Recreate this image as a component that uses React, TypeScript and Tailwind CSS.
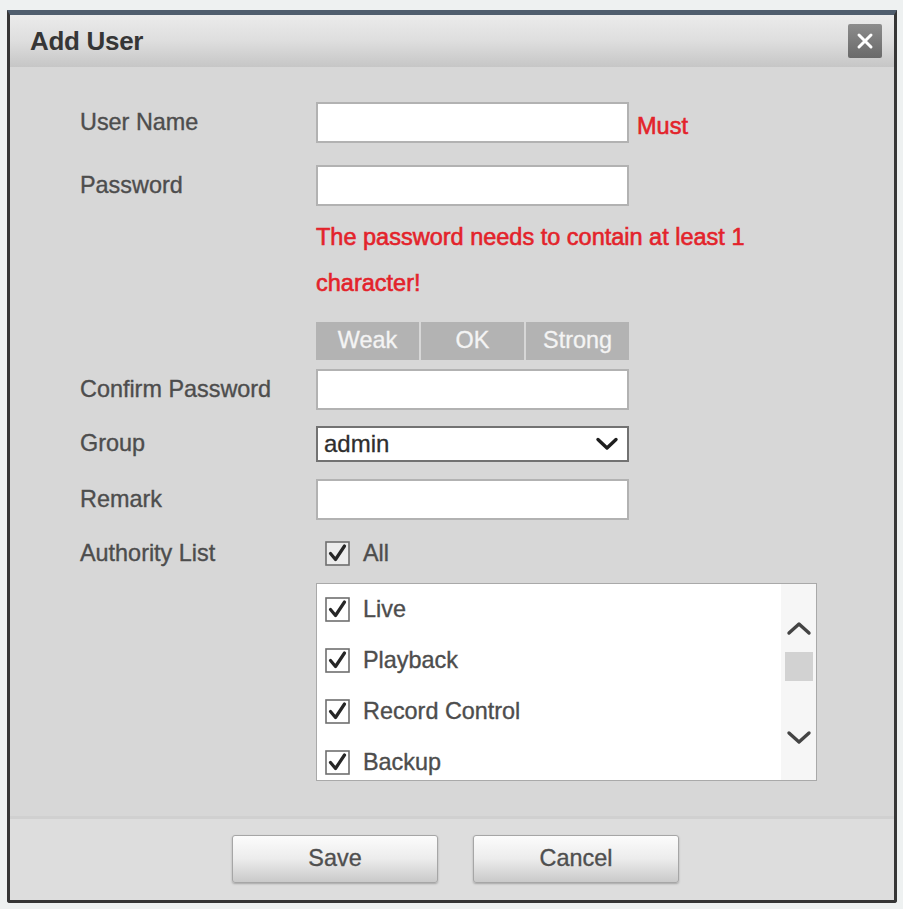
import React from "react";

function Check({ bg = "#ffffff" }: { bg?: string }) {
  return (
    <svg width="25" height="25" viewBox="0 0 25 25" className="shrink-0">
      <rect x="1" y="1" width="23" height="23" fill={bg} stroke="#6f6f6f" strokeWidth="1.6" />
      <path d="M5.5 12.5 L10.5 18.5 L19.5 5" fill="none" stroke="#262626" strokeWidth="3.2" strokeLinecap="round" strokeLinejoin="round" />
    </svg>
  );
}

function Label({ children }: { children: React.ReactNode }) {
  return <div className="w-[236px] shrink-0 text-[23.4px] text-[#4d4d4d] [-webkit-text-stroke:0.35px]">{children}</div>;
}

function TextInput() {
  return <div className="w-[313px] h-[41px] bg-white border-2 border-[#b2b2b2]" />;
}

export default function App() {
  const items = ["Live", "Playback", "Record Control", "Backup"];
  return (
    <div className="w-[903px] h-[909px] bg-[#eef1f1] pl-[7px] pt-[10px] font-['Liberation_Sans',Arial,sans-serif]">
      <div className="w-[890px] h-[893px] flex flex-col border-x-[3px] border-b-[3px] border-[#363636] border-t-[5px] border-t-[#4f5d6d] rounded-b-[3px] bg-[#d7d7d7] overflow-hidden">
        {/* Title bar */}
        <div className="h-[52px] shrink-0 flex items-center justify-between pl-[20px] pr-[12px] bg-linear-to-b from-[#ebebeb] via-[#dedede] to-[#c6c6c6]">
          <div className="text-[26px] font-bold text-[#363636] tracking-[-0.3px]">Add User</div>
          <div className="w-[34px] h-[34px] rounded-[2px] bg-linear-to-b from-[#8c8c8c] to-[#6a6a6a] flex items-center justify-center">
            <svg width="20" height="20" viewBox="0 0 20 20">
              <path d="M4 4 L16 16 M16 4 L4 16" stroke="#ffffff" strokeWidth="3" strokeLinecap="round" />
            </svg>
          </div>
        </div>

        {/* Body */}
        <div className="flex-1 flex flex-col pl-[70px]">
          <div className="flex items-center h-[41px] mt-[35px]">
            <Label>User Name</Label>
            <TextInput />
            <div className="ml-[8px] mt-[8px] text-[23.5px] text-[#e3232b] [-webkit-text-stroke:0.6px]">Must</div>
          </div>
          <div className="flex items-center h-[41px] mt-[22px]">
            <Label>Password</Label>
            <TextInput />
          </div>
          <div className="flex mt-[8px]">
            <div className="w-[236px] shrink-0" />
            <div className="text-[23.5px] leading-[46px] text-[#e3232b] [-webkit-text-stroke:0.6px]">
              <div>The password needs to contain at least 1</div>
              <div>character!</div>
            </div>
          </div>
          <div className="flex mt-[16px]">
            <div className="w-[236px] shrink-0" />
            <div className="w-[313px] h-[38px] flex gap-[2px]">
              {["Weak", "OK", "Strong"].map((t) => (
                <div key={t} className="flex-1 bg-[#b3b3b3] flex items-center justify-center text-[23.4px] text-[#f4f4f4] [-webkit-text-stroke:0.3px]">
                  {t}
                </div>
              ))}
            </div>
          </div>
          <div className="flex items-center h-[41px] mt-[9px]">
            <Label>Confirm Password</Label>
            <TextInput />
          </div>
          <div className="flex items-center h-[36px] mt-[16px]">
            <Label>Group</Label>
            <div className="w-[313px] h-[36px] bg-white border-2 border-[#727272] flex items-center justify-between pl-[6px] pr-[8px]">
              <span className="text-[24px] text-[#2e2e2e] [-webkit-text-stroke:0.3px]">admin</span>
              <svg width="24" height="14" viewBox="0 0 24 14">
                <path d="M3 2.5 L12 11 L21 2.5" fill="none" stroke="#1e1e1e" strokeWidth="3.4" strokeLinecap="round" strokeLinejoin="round" />
              </svg>
            </div>
          </div>
          <div className="flex items-center h-[41px] mt-[17px]">
            <Label>Remark</Label>
            <TextInput />
          </div>
          <div className="flex items-center h-[25px] mt-[21px]">
            <Label>Authority List</Label>
            <div className="flex items-center gap-[13px] pl-[9px]">
              <Check bg="#ececec" />
              <span className="text-[23.4px] text-[#4d4d4d] [-webkit-text-stroke:0.35px]">All</span>
            </div>
          </div>
          <div className="flex mt-[17px]">
            <div className="w-[236px] shrink-0" />
            <div className="w-[501px] h-[198px] border border-[#a9a9a9] bg-white flex overflow-hidden">
              <div className="flex-1 flex flex-col">
                {items.map((t) => (
                  <div key={t} className="h-[51px] shrink-0 flex items-center gap-[13px] pl-[8px]">
                    <Check />
                    <span className="text-[23.4px] text-[#4d4d4d] [-webkit-text-stroke:0.35px]">{t}</span>
                  </div>
                ))}
              </div>
              <div className="w-[35px] shrink-0 bg-[#f6f6f6] flex flex-col items-center">
                <svg width="26" height="16" viewBox="0 0 26 16" className="mt-[36px]">
                  <path d="M3 13 L13 4 L23 13" fill="none" stroke="#444" strokeWidth="3.4" strokeLinecap="round" strokeLinejoin="round" />
                </svg>
                <div className="w-[28px] h-[29px] mt-[16px] bg-[#d2d2d2]" />
                <svg width="26" height="16" viewBox="0 0 26 16" className="mt-[49px]">
                  <path d="M3 3 L13 12 L23 3" fill="none" stroke="#444" strokeWidth="3.4" strokeLinecap="round" strokeLinejoin="round" />
                </svg>
              </div>
            </div>
          </div>
        </div>

        {/* Footer */}
        <div className="h-[84px] shrink-0 border-t-[3px] border-[#d0d0d0] bg-[#dddddd] flex gap-[35px] pl-[222px] pt-[16px]">
          {["Save", "Cancel"].map((t) => (
            <div
              key={t}
              className="w-[206px] h-[48px] rounded-[3px] border border-[#a6a6a6] bg-linear-to-b from-[#fcfcfc] via-[#ececec] to-[#c9c9c9] shadow-[0_1px_2px_rgba(0,0,0,0.25)] flex items-center justify-center text-[23.4px] text-[#4f4f4f] [-webkit-text-stroke:0.35px]"
            >
              {t}
            </div>
          ))}
        </div>
      </div>
    </div>
  );
}
